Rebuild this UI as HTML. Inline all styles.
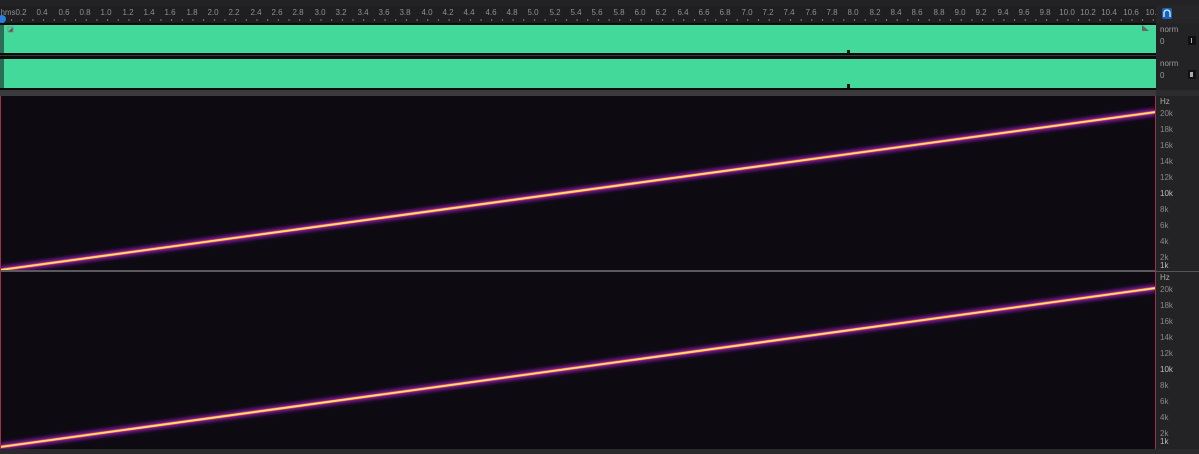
<!DOCTYPE html><html><head><style>
html,body{margin:0;padding:0;background:#1d1d1f;width:1199px;height:454px;overflow:hidden;font-family:"Liberation Sans",sans-serif}
</style></head><body>
<svg width="1199" height="454" xmlns="http://www.w3.org/2000/svg" style="display:block">
<defs>
<filter id="g" x="-5%" y="-50%" width="110%" height="200%"><feGaussianBlur stdDeviation="2"/></filter>
<pattern id="tk" width="10.67" height="6" patternUnits="userSpaceOnUse" x="0.4"><rect x="0" y="0" width="1" height="3" fill="#777"/></pattern>
</defs>
<rect width="1199" height="454" fill="#1f1f21"/>
<rect x="0" y="0" width="1199" height="6" fill="#232325"/>
<rect x="0" y="6" width="1156" height="17" fill="#1f1f21"/>
<rect x="0" y="19" width="1156" height="4" fill="url(#tk)"/>
<g fill="#8e8e8e" font-size="8" text-anchor="middle" font-family="Liberation Sans,sans-serif">
<text x="8" y="15">hms</text>
<text x="21" y="15">0.2</text><text x="42" y="15">0.4</text><text x="64" y="15">0.6</text><text x="85" y="15">0.8</text><text x="106" y="15">1.0</text><text x="128" y="15">1.2</text><text x="149" y="15">1.4</text><text x="170" y="15">1.6</text><text x="192" y="15">1.8</text><text x="213" y="15">2.0</text><text x="234" y="15">2.2</text><text x="256" y="15">2.4</text><text x="277" y="15">2.6</text><text x="298" y="15">2.8</text><text x="320" y="15">3.0</text><text x="341" y="15">3.2</text><text x="363" y="15">3.4</text><text x="384" y="15">3.6</text><text x="405" y="15">3.8</text><text x="427" y="15">4.0</text><text x="448" y="15">4.2</text><text x="469" y="15">4.4</text><text x="491" y="15">4.6</text><text x="512" y="15">4.8</text><text x="533" y="15">5.0</text><text x="555" y="15">5.2</text><text x="576" y="15">5.4</text><text x="597" y="15">5.6</text><text x="619" y="15">5.8</text><text x="640" y="15">6.0</text><text x="661" y="15">6.2</text><text x="683" y="15">6.4</text><text x="704" y="15">6.6</text><text x="725" y="15">6.8</text><text x="747" y="15">7.0</text><text x="768" y="15">7.2</text><text x="789" y="15">7.4</text><text x="811" y="15">7.6</text><text x="832" y="15">7.8</text><text x="853" y="15">8.0</text><text x="875" y="15">8.2</text><text x="896" y="15">8.4</text><text x="917" y="15">8.6</text><text x="939" y="15">8.8</text><text x="960" y="15">9.0</text><text x="981" y="15">9.2</text><text x="1003" y="15">9.4</text><text x="1024" y="15">9.6</text><text x="1045" y="15">9.8</text><text x="1067" y="15">10.0</text><text x="1088" y="15">10.2</text><text x="1109" y="15">10.4</text><text x="1131" y="15">10.6</text><text x="1151" y="15">10.</text>
</g>
<circle cx="2" cy="19" r="4" fill="#2a7fe0"/>
<rect x="0" y="23" width="1156" height="68" fill="#0c0c0c"/>
<rect x="3" y="25" width="1153" height="28" fill="#42d99a"/>
<rect x="3" y="59" width="1153" height="29" fill="#42d99a"/>
<rect x="0" y="55" width="1156" height="1" fill="#3a3a3a"/>
<rect x="0" y="25" width="4" height="28" fill="#2a6e55"/>
<rect x="0" y="59" width="4" height="29" fill="#2a6e55"/>
<path d="M8 32 L13 27 L13 32 Z" fill="#555"/><rect x="8" y="27" width="5" height="5" fill="none" stroke="#888" stroke-width="0.8"/>
<path d="M1142 25 L1149 31 L1142 31Z" fill="#666"/>
<rect x="847" y="50" width="3" height="4" fill="#111"/><rect x="847" y="84" width="3" height="4" fill="#111"/>
<rect x="0" y="90" width="1156" height="6" fill="#3a3a3c"/>
<rect x="0" y="96" width="1156" height="175" fill="#0d0a12"/>
<line x1="0" y1="270" x2="1156" y2="112" stroke="#9a22c0" stroke-width="6" filter="url(#g)"/>
<line x1="0" y1="270" x2="1156" y2="112" stroke="#f05050" stroke-width="3"/>
<line x1="0" y1="270" x2="1156" y2="112" stroke="#ffe070" stroke-width="1.8"/>
<rect x="0" y="270" width="1156" height="2" fill="#5a5a5e"/>
<rect x="0" y="272" width="1156" height="177" fill="#0d0a12"/>
<line x1="0" y1="447" x2="1156" y2="288" stroke="#9a22c0" stroke-width="6" filter="url(#g)"/>
<line x1="0" y1="447" x2="1156" y2="288" stroke="#f05050" stroke-width="3"/>
<line x1="0" y1="447" x2="1156" y2="288" stroke="#ffe070" stroke-width="1.8"/>
<rect x="0" y="96" width="1" height="353" fill="#a0304a"/>
<rect x="1155" y="96" width="1" height="353" fill="#a0304a"/>
<rect x="1156" y="0" width="43" height="454" fill="#232325"/>
<rect x="1156" y="6" width="43" height="17" fill="#262628"/>
<rect x="1162" y="8" width="10" height="11" rx="2" fill="#1f5fb8"/>
<path d="M1164 17 v-4 a3 3 0 0 1 6 0 v4" stroke="#cfe" stroke-width="1.3" fill="none"/>
<g fill="#9a9a9a" font-size="8" font-family="Liberation Sans,sans-serif">
<text x="1160" y="32">norm</text><text x="1160" y="44">0</text>
<text x="1160" y="66">norm</text><text x="1160" y="78">0</text>
</g>
<rect x="1188" y="36" width="8" height="9" fill="#111"/><rect x="1191" y="38" width="1" height="5" fill="#aaa"/>
<rect x="1188" y="70" width="8" height="9" fill="#111"/><rect x="1190" y="72" width="3" height="5" fill="#aaa"/>
<rect x="1156" y="90" width="43" height="6" fill="#2c2c2e"/>
<g fill="#888" font-size="8" font-family="Liberation Sans,sans-serif">
<text x="1160" y="104" fill="#aaa">Hz</text>
<text x="1160" y="116">20k</text><text x="1160" y="132">18k</text><text x="1160" y="148">16k</text><text x="1160" y="164">14k</text><text x="1160" y="180">12k</text><text x="1160" y="196" fill="#bbb">10k</text><text x="1160" y="212">8k</text><text x="1160" y="228">6k</text><text x="1160" y="244">4k</text><text x="1160" y="260">2k</text><text x="1160" y="268" fill="#bbb">1k</text>
<text x="1160" y="280" fill="#aaa">Hz</text>
<text x="1160" y="292">20k</text><text x="1160" y="308">18k</text><text x="1160" y="324">16k</text><text x="1160" y="340">14k</text><text x="1160" y="356">12k</text><text x="1160" y="372" fill="#bbb">10k</text><text x="1160" y="388">8k</text><text x="1160" y="404">6k</text><text x="1160" y="420">4k</text><text x="1160" y="436">2k</text><text x="1160" y="444" fill="#bbb">1k</text>
</g>
<rect x="1156" y="271" width="43" height="1" fill="#555"/>
<rect x="0" y="449" width="1199" height="5" fill="#2a2a2c"/>
</svg>
</body></html>
